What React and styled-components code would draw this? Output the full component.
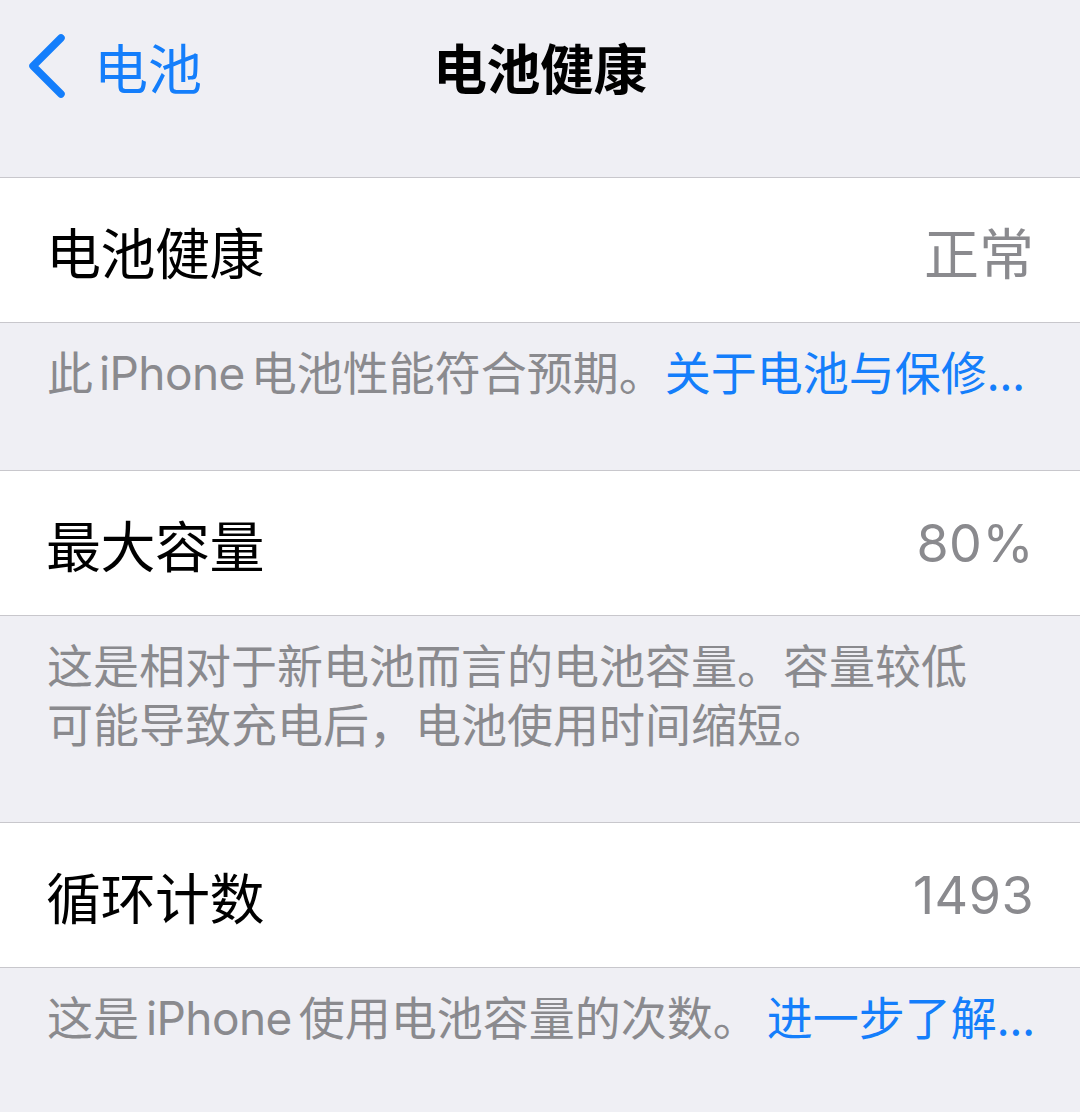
import React from "react";
import styled, { createGlobalStyle } from "styled-components";

const Global = createGlobalStyle`
  html, body { margin: 0; padding: 0; background: #efeff4; }
  body { font-family: "Inter", "Noto Sans CJK SC", "Noto Sans", sans-serif; -webkit-font-smoothing: antialiased; }
`;

const Page = styled.div`
  width: 1080px;
  min-height: 1112px;
  background: #efeff4;
  overflow: hidden;
`;

const NavBar = styled.header`
  position: relative;
  height: 132px;
  display: flex;
  align-items: center;
  justify-content: center;
`;

const Back = styled.div`
  position: absolute;
  left: 26px;
  top: 0;
  height: 132px;
  display: flex;
  align-items: center;
  gap: 26px;
  color: #147efb;
  font-size: 54px;
  font-family: "Noto Sans CJK SC", sans-serif;
`;

const Title = styled.h1`
  margin: 0;
  font-size: 54px;
  font-weight: 700;
  color: #000;
  font-family: "Noto Sans CJK SC", sans-serif;
  letter-spacing: -0.5px;
`;

const Group = styled.section`
  margin-top: ${(p) => p.$top || 0}px;
`;

const Row = styled.div`
  height: 144px;
  background: #fff;
  border-top: 1px solid #c8c7cc;
  border-bottom: 1px solid #c8c7cc;
  display: flex;
  align-items: center;
  justify-content: space-between;
  padding: 0 46px 0 46px;
`;

const Label = styled.span`
  font-size: 55px;
  color: #000;
  font-family: "Noto Sans CJK SC", sans-serif;
  letter-spacing: -0.5px;
`;

const Value = styled.span`
  font-size: ${(p) => (p.$num ? 52 : 55)}px;
  color: #8a8a8e;
  font-family: ${(p) => (p.$num ? '"Inter", sans-serif' : '"Noto Sans CJK SC", sans-serif')};
  letter-spacing: ${(p) => (p.$num ? "0.5px" : "0")};
`;

const Footer = styled.div`
  padding: 18px 20px 70px 47px;
  font-size: 46px;
  color: #8a8a8e;
  font-family: "Noto Sans CJK SC", sans-serif;
  white-space: nowrap;
`;

const Line = styled.div`
  height: 59px;
  line-height: 59px;
`;

const Latin = styled.span`
  font-family: "Inter", sans-serif;
  letter-spacing: -0.6px;
  line-height: 0;
  margin: 0 ${(p) => p.$m || 8}px;
`;

const Link = styled.span`
  color: #147efb;
  margin-left: ${(p) => p.$gap || 0}px;
`;

const Chevron = () => (
  <svg width="42" height="66" viewBox="0 0 42 66">
    <path d="M35 5 L7 33 L35 61" fill="none" stroke="#147efb" strokeWidth="7.5" strokeLinecap="round" strokeLinejoin="round" />
  </svg>
);

export default function App() {
  return (
    <Page>
      <Global />
      <NavBar>
        <Back>
          <Chevron />
          <span>电池</span>
        </Back>
        <Title>电池健康</Title>
      </NavBar>
      <Group $top={45}>
        <Row>
          <Label>电池健康</Label>
          <Value>正常</Value>
        </Row>
        <Footer>
          <Line>
            此<Latin $m={6}>iPhone</Latin>电池性能符合预期。<Link>关于电池与保修...</Link>
          </Line>
        </Footer>
      </Group>
      <Group>
        <Row>
          <Label>最大容量</Label>
          <Value $num>80%</Value>
        </Row>
        <Footer>
          <Line>这是相对于新电池而言的电池容量。容量较低</Line>
          <Line>可能导致充电后，电池使用时间缩短。</Line>
        </Footer>
      </Group>
      <Group>
        <Row>
          <Label>循环计数</Label>
          <Value $num>1493</Value>
        </Row>
        <Footer>
          <Line>
            这是<Latin $m={7}>iPhone</Latin>使用电池容量的次数。<Link $gap={8}>进一步了解...</Link>
          </Line>
        </Footer>
      </Group>
    </Page>
  );
}
